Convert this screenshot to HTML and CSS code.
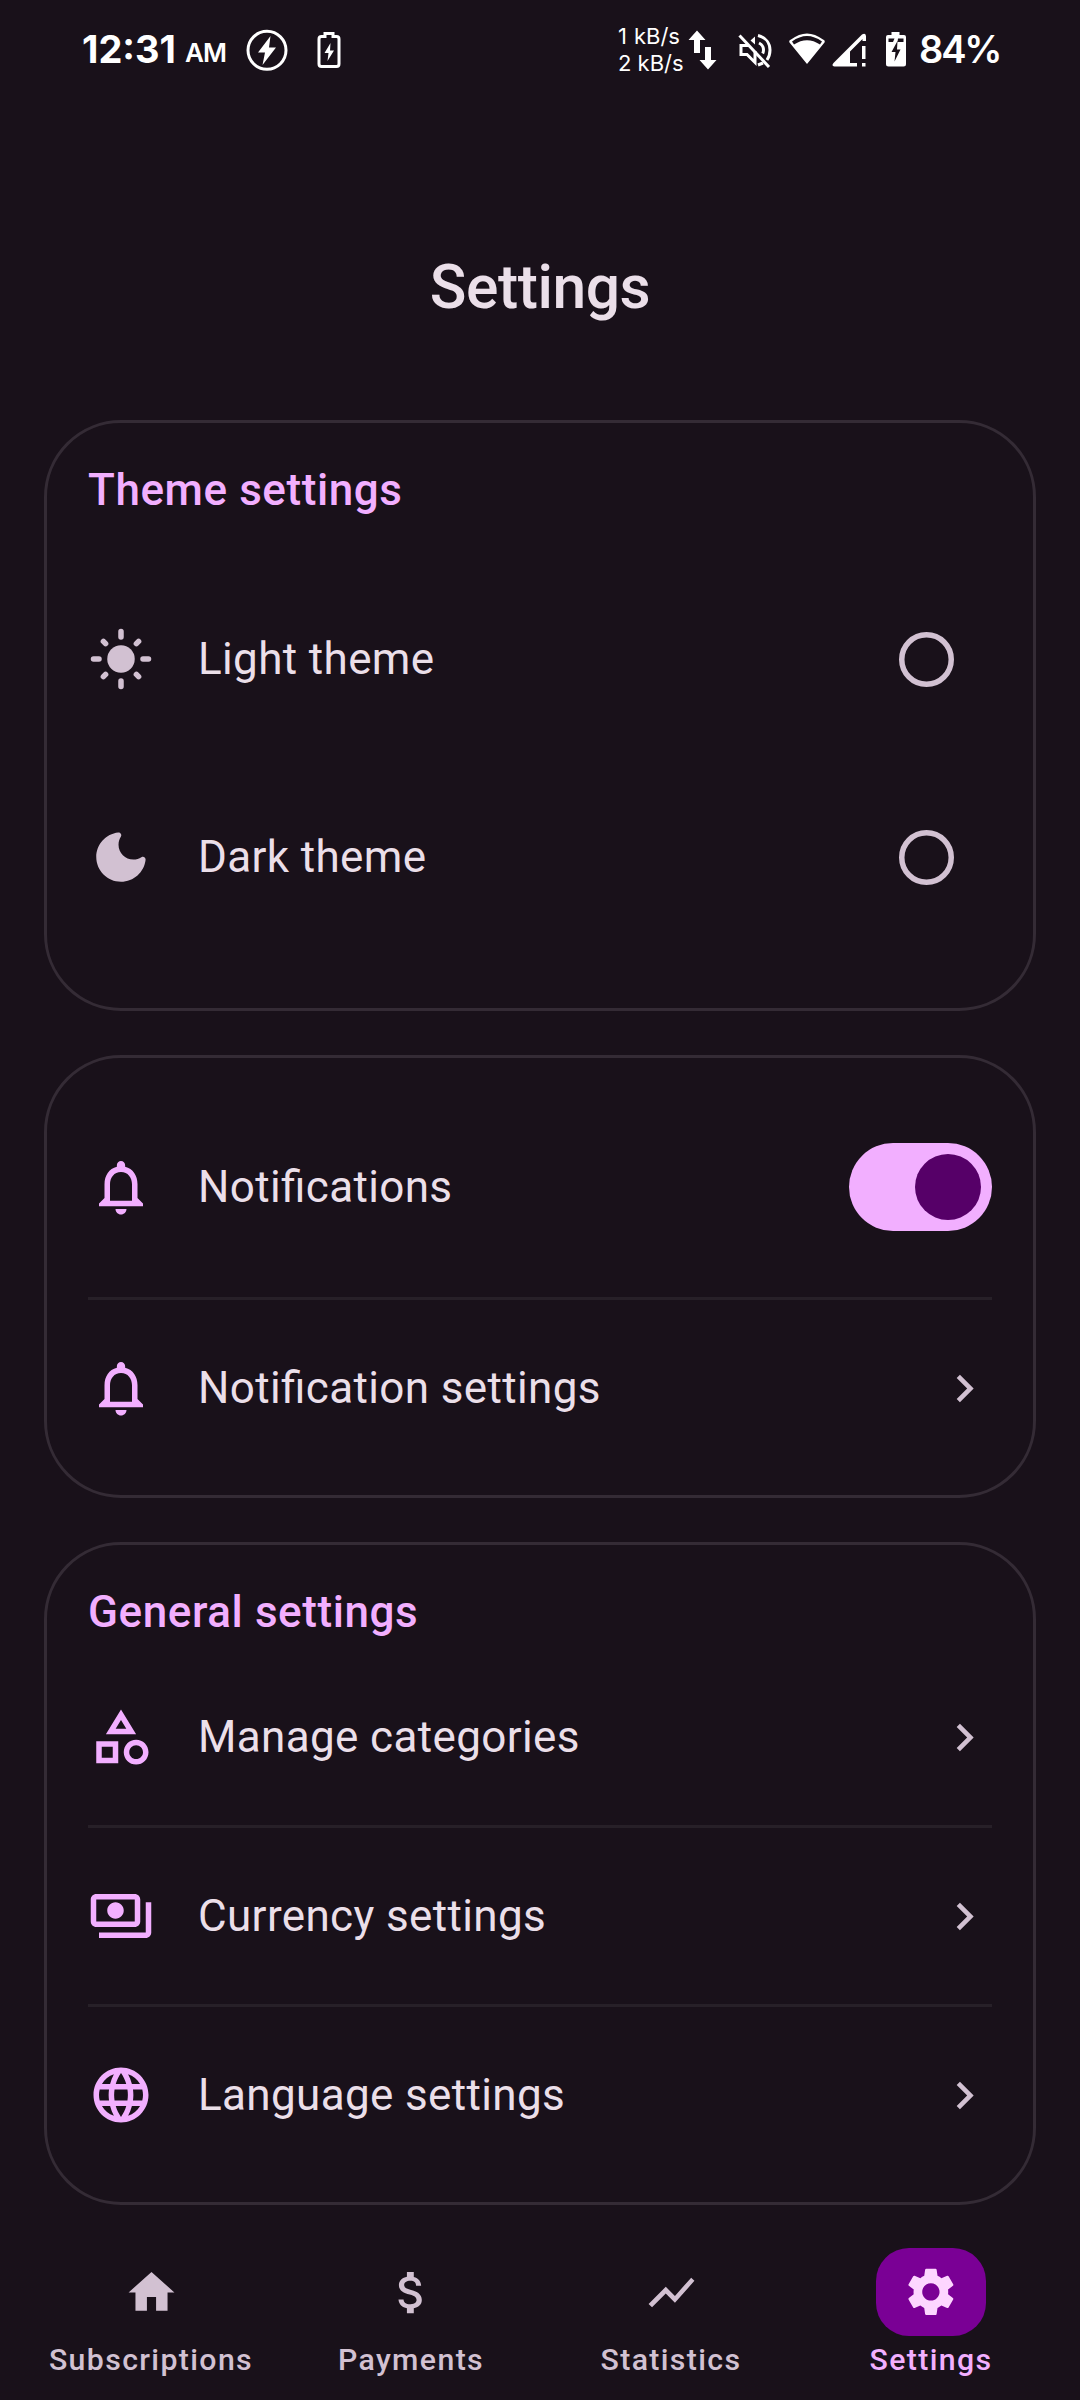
FILE: index.html
```html
<!DOCTYPE html>
<html lang="en">
<head>
<meta charset="utf-8">
<title>Settings</title>
<link rel="stylesheet" href="styles.css">
</head>
<body>
<div class="screen">
  <div class="status-bar">
    <span class="clock">12:31</span><span class="meridiem">AM</span>
    <svg class="bolt-ring" width="44" height="44" viewBox="0 0 44 44"><circle cx="22" cy="22.3" r="19" fill="none" stroke="#fff" stroke-width="3"/><path d="M25.5 8 13 24.500h7L17.500 37 31 19.500h-7z" fill="#fff"/></svg>
    <svg class="battery-outline" width="26" height="44" viewBox="0 0 26 44"><path d="M9 8.500V5.500h8v3h3.500q2.500 0 2.500 2.500v25q0 2.500-2.500 2.500h-15Q3 38.500 3 36V11q0-2.500 2.500-2.500z" fill="none" stroke="#fff" stroke-width="3"/><path d="M14.500 15 8.500 25h4l-1 8 6.500-10.500h-4z" fill="#fff"/></svg>
    <div class="net-speed"><span>1<i class="thin-gap"></i>kB/s</span><span>2 kB/s</span></div>
    <svg class="arrows" width="30" height="44" viewBox="0 0 30 44"><path d="M9 2.500 17.500 12H12v13H6V12H.500zM20 41.500 11.500 32H17V19h6v13h5.500z" fill="#fff"/></svg>
    <svg class="muted" width="34" height="44" viewBox="0 0 34 44"><g fill="none" stroke="#fff" stroke-width="3"><path d="M1.500 7.500 31 39"/><path d="M11 17.500H3v9h6l8 8V23"/><path d="M20 7.500c8 2 12 8 12 14.500 0 4-1 7-3 10M21 15c3 1.500 4.500 4 4.500 7 0 1.500-.3 2.500-.8 3.500M20 37l5-2"/></g><path d="M17 8.500v8l-4.500-4z" fill="#fff"/></svg>
    <svg class="wifi" width="40" height="44" viewBox="0 0 40 44"><path d="M20 36 2.500 14.500Q1.500 12.500 4 11.500 20 -.500 36 11.500q2.500 1 1.500 3z" fill="#fff"/><path d="M5 13.500q15-11 30 0l-2 3Q20 8 7 16.500z" fill="#19111a"/></svg>
    <svg class="signal" width="36" height="44" viewBox="0 0 36 44"><path d="M2.500 38.500Q-1 38 1.500 35L30 6.500q3.500-2 4 1.500v5h-3.500V11L18 23.500V35h7v3.500z" fill="#fff"/><path d="M30 18h3.500v13H30zM30 35h3.500v3.500H30z" fill="#fff"/></svg>
    <svg class="battery-full" width="22" height="44" viewBox="0 0 22 44"><path d="M6.500 7V4h8v3H19q2 0 2 2v27q0 2.500-2.500 2.500h-15Q1 38.500 1 36V9q0-2 2-2z" fill="#fff"/><path d="M3.500 10.500h6l-1.500 3.500h-4.500zM13 10.500h5.500V14h-6zM12.500 13 6.500 24h4l-1 9.500 6-12H12z" fill="#19111a"/></svg>
    <span class="percent">84%</span>
  </div>

  <h1 class="page-title">Settings</h1>

  <main class="cards">
    <section class="card theme-card">
      <h2 class="card-title">Theme settings</h2>
      <div class="row">
        <svg class="icon muted-tone" viewBox="0 0 24 24"><circle cx="12" cy="12" r="5"/><path fill="none" stroke="currentColor" stroke-width="2" stroke-linecap="round" d="M12 2v2M12 20v2M2 12h2M20 12h2M5.600 5.600l.8.8M17.600 17.600l.8.8M5.600 18.400l.8-.8M17.600 6.400l.8-.8"/></svg>
        <span class="label">Light theme</span><svg class="radio" viewBox="0 0 20 20"><circle cx="10" cy="10" r="9"/></svg>
      </div>
      <div class="row">
        <svg class="icon muted-tone" viewBox="0 0 24 24"><path d="M11.010 3.050C6.510 3.540 3 7.360 3 12c0 4.970 4.030 9 9 9 4.630 0 8.450-3.500 8.950-8 .09-.79-.78-1.420-1.540-.95-.84.54-1.840.85-2.910.85-2.980 0-5.400-2.420-5.400-5.400 0-1.060.31-2.060.84-2.890.45-.67-.04-1.630-.93-1.560z"/></svg>
        <span class="label">Dark theme</span><svg class="radio" viewBox="0 0 20 20"><circle cx="10" cy="10" r="9"/></svg>
      </div>
    </section>

    <section class="card notify-card">
      <div class="row tall">
        <svg class="icon" viewBox="0 0 24 24"><path d="M12 22c1.100 0 2-.9 2-2h-4c0 1.100.9 2 2 2zm6-6v-5c0-3.070-1.630-5.640-4.500-6.320V4c0-.83-.67-1.500-1.500-1.500s-1.500.67-1.500 1.500v.68C7.640 5.360 6 7.920 6 11v5l-2 2v1h16v-1l-2-2zm-2 1H8v-6c0-2.480 1.510-4.500 4-4.500s4 2.020 4 4.500v6z"/></svg>
        <span class="label">Notifications</span><span class="switch"><span class="thumb"></span></span>
      </div>
      <div class="row divided">
        <svg class="icon" viewBox="0 0 24 24"><path d="M12 22c1.100 0 2-.9 2-2h-4c0 1.100.9 2 2 2zm6-6v-5c0-3.070-1.630-5.640-4.500-6.320V4c0-.83-.67-1.500-1.500-1.500s-1.500.67-1.500 1.500v.68C7.640 5.360 6 7.920 6 11v5l-2 2v1h16v-1l-2-2zm-2 1H8v-6c0-2.480 1.510-4.500 4-4.500s4 2.020 4 4.500v6z"/></svg>
        <span class="label">Notification settings</span>
        <svg class="chevron" viewBox="0 0 24 24"><path d="M10 6 8.590 7.410 13.170 12l-4.580 4.590L10 18l6-6z"/></svg>
      </div>
    </section>

    <section class="card general-card">
      <h2 class="card-title">General settings</h2>
      <div class="row">
        <svg class="icon" viewBox="0 0 24 24"><path d="M12 2l-5.500 9h11L12 2zm0 3.840L13.930 9h-3.870L12 5.840zM17.500 13c-2.490 0-4.500 2.010-4.500 4.500s2.010 4.500 4.500 4.500 4.500-2.010 4.500-4.500-2.010-4.500-4.500-4.500zm0 7c-1.380 0-2.500-1.120-2.500-2.500s1.120-2.500 2.500-2.500 2.500 1.120 2.500 2.500-1.120 2.500-2.500 2.500zM3 21.500h8v-8H3v8zm2-6h4v4H5v-4z"/></svg>
        <span class="label">Manage categories</span>
        <svg class="chevron" viewBox="0 0 24 24"><path d="M10 6 8.590 7.410 13.170 12l-4.580 4.590L10 18l6-6z"/></svg>
      </div>
      <div class="row divided">
        <svg class="icon" viewBox="0 0 24 24"><path d="M19 14V6c0-1.100-.9-2-2-2H3c-1.100 0-2 .9-2 2v8c0 1.100.9 2 2 2h14c1.100 0 2-.9 2-2zm-2 0H3V6h14v8zm-7-7c-1.660 0-3 1.340-3 3s1.340 3 3 3 3-1.340 3-3-1.340-3-3-3zm13 0v11c0 1.100-.9 2-2 2H4v-2h17V7h2z"/></svg>
        <span class="label">Currency settings</span>
        <svg class="chevron" viewBox="0 0 24 24"><path d="M10 6 8.590 7.410 13.170 12l-4.580 4.590L10 18l6-6z"/></svg>
      </div>
      <div class="row divided">
        <svg class="icon" viewBox="0 0 24 24"><path d="M11.990 2C6.470 2 2 6.480 2 12s4.470 10 9.990 10C17.520 22 22 17.520 22 12S17.520 2 11.990 2zm6.930 6h-2.950c-.32-1.250-.78-2.450-1.380-3.560 1.840.63 3.370 1.910 4.330 3.560zM12 4.040c.83 1.200 1.480 2.530 1.910 3.960h-3.820c.43-1.430 1.080-2.760 1.910-3.960zM4.260 14C4.100 13.360 4 12.690 4 12s.1-1.360.26-2h3.380c-.08.66-.14 1.320-.14 2s.06 1.340.14 2H4.260zm.82 2h2.950c.32 1.250.78 2.450 1.380 3.560-1.840-.63-3.370-1.900-4.330-3.560zm2.950-8H5.080c.96-1.660 2.490-2.930 4.330-3.560C8.810 5.550 8.350 6.750 8.030 8zM12 19.960c-.83-1.200-1.480-2.530-1.910-3.960h3.820c-.43 1.430-1.080 2.760-1.910 3.960zM14.340 14H9.660c-.09-.66-.16-1.320-.16-2s.07-1.350.16-2h4.680c.09.65.16 1.320.16 2s-.07 1.340-.16 2zm.25 5.560c.6-1.110 1.060-2.310 1.380-3.560h2.950c-.96 1.650-2.490 2.930-4.330 3.560zM16.360 14c.08-.66.14-1.320.14-2s-.06-1.340-.14-2h3.380c.16.64.26 1.310.26 2s-.1 1.360-.26 2h-3.380z"/></svg>
        <span class="label">Language settings</span>
        <svg class="chevron" viewBox="0 0 24 24"><path d="M10 6 8.590 7.410 13.170 12l-4.580 4.590L10 18l6-6z"/></svg>
      </div>
    </section>
  </main>

  <nav class="bottom-nav">
    <div class="tab"><span class="pill"><svg viewBox="0 0 24 24"><path d="M10 20v-6h4v6h5v-8h3L12 3 2 12h3v8z"/></svg></span><span class="tab-label">Subscriptions</span></div>
    <div class="tab"><span class="pill"><svg viewBox="0 0 24 24"><path d="M11.800 10.900c-2.270-.59-3-1.200-3-2.150 0-1.090 1.010-1.850 2.700-1.850 1.780 0 2.440.85 2.500 2.100h2.210c-.07-1.720-1.120-3.300-3.210-3.810V3h-3v2.160c-1.940.42-3.500 1.680-3.500 3.610 0 2.310 1.910 3.460 4.700 4.130 2.500.6 3 1.480 3 2.410 0 .69-.49 1.790-2.700 1.790-2.060 0-2.870-.92-2.980-2.100h-2.200c.12 2.190 1.760 3.420 3.680 3.830V21h3v-2.150c1.950-.37 3.500-1.500 3.500-3.550 0-2.840-2.430-3.810-4.700-4.400z"/></svg></span><span class="tab-label">Payments</span></div>
    <div class="tab"><span class="pill"><svg viewBox="0 0 24 24"><path d="M3.500 18.490l6-6.010 4 4L22 6.920l-1.410-1.410-7.090 7.970-4-4L2 16.990z"/></svg></span><span class="tab-label">Statistics</span></div>
    <div class="tab active"><span class="pill"><svg viewBox="0 0 24 24"><path d="M19.140 12.940c.04-.3.06-.61.06-.94 0-.32-.02-.64-.07-.94l2.030-1.580c.18-.14.23-.41.12-.61l-1.920-3.320c-.12-.22-.37-.29-.59-.22l-2.390.96c-.5-.38-1.030-.7-1.620-.94l-.36-2.540c-.04-.24-.24-.41-.48-.41h-3.840c-.24 0-.43.17-.47.41l-.36 2.540c-.59.24-1.130.57-1.620.94l-2.390-.96c-.22-.08-.47 0-.59.22L2.740 8.870c-.12.21-.08.47.12.61l2.030 1.580c-.05.3-.09.63-.09.94s.02.64.07.94l-2.030 1.580c-.18.14-.23.41-.12.61l1.920 3.320c.12.22.37.29.59.22l2.390-.96c.5.38 1.030.7 1.620.94l.36 2.540c.05.24.24.41.48.41h3.840c.24 0 .44-.17.47-.41l.36-2.540c.59-.24 1.130-.56 1.620-.94l2.390.96c.22.08.47 0 .59-.22l1.920-3.320c.12-.22.07-.47-.12-.61l-2.010-1.580zM12 15.600c-1.980 0-3.600-1.620-3.600-3.600s1.620-3.600 3.600-3.600 3.600 1.620 3.600 3.600-1.620 3.600-3.600 3.600z"/></svg></span><span class="tab-label">Settings</span></div>
  </nav>
</div>
</body>
</html>
```
FILE: styles.css
```css
* { box-sizing: border-box; }
body {
  margin: 0;
  background: #19111a;
  color: #ebdfe9;
  font-family: Roboto, "Liberation Sans", sans-serif;
}
h1, h2 { margin: 0; font-weight: 500; }
svg { display: block; flex: none; fill: currentColor; }
.screen { width: 1080px; height: 2400px; display: flex; flex-direction: column; overflow: hidden; }

.status-bar {
  height: 100px;
  padding: 0 81px 0 82px;
  display: flex;
  align-items: center;
  color: #fff;
  font-family: Inter, sans-serif;
  white-space: nowrap;
}
.clock { width: 95px; padding-bottom: 2px; font-size: 38px; line-height: 44px; font-weight: 700; letter-spacing: 0; }
.meridiem { width: 46px; padding-top: 5px; margin-left: 8px; font-size: 26px; line-height: 30px; font-weight: 600; letter-spacing: -1px; }
.bolt-ring { margin-left: 14px; }
.battery-outline { margin-left: 27px; }
.net-speed {
  width: 68px;
  margin-left: auto;
  padding-bottom: 1px;
  display: flex;
  flex-direction: column;
  font-size: 22px;
  line-height: 27px;
}
.thin-gap { display: inline-block; width: 7px; }
.arrows { margin-left: 2px; }
.muted { margin-left: 20px; }
.wifi { margin-left: 15px; }
.signal { margin-left: 5px; }
.battery-full { margin-left: 17px; }
.percent { width: 80px; padding-bottom: 2px; margin-left: 12px; font-size: 38px; line-height: 44px; font-weight: 600; letter-spacing: -2.2px; }

.page-title { margin-top: 149px; text-align: center; font-size: 60.5px; line-height: 77px; letter-spacing: -0.4px; }

.cards { margin-top: 94px; padding: 0 44px; display: flex; flex-direction: column; gap: 44px; }
.card { border: 3px solid #342b35; border-radius: 77px; padding: 0 41px; }
.theme-card { height: 591px; padding-top: 34px; }
.theme-card .card-title { margin-bottom: 37px; }
.theme-card .row { height: 198px; }
.notify-card { height: 443px; padding-top: 19px; }
.general-card { height: 663px; padding-top: 34px; }
.general-card .card-title { margin-bottom: 4px; }
.card-title { color: #f2afff; font-size: 44px; line-height: 66px; letter-spacing: 0.58px; }

.row { height: 176px; display: flex; align-items: center; }
.row.tall { height: 220px; }
.row.divided { height: 179px; border-top: 3px solid #272028; }
.icon { width: 66px; height: 66px; margin-right: 44px; color: #f2afff; }
.icon.muted-tone { color: #d2c1d2; }
.label { flex: 1; font-size: 44px; line-height: 66px; letter-spacing: 0.36px; font-feature-settings: "liga" 1; }
.chevron { width: 55px; height: 55px; color: #d2c1d2; }
.radio { width: 55px; height: 55px; margin-right: 38px; fill: none; stroke: #d2c1d2; stroke-width: 2; }
.switch { width: 143px; height: 88px; padding: 11px; border-radius: 44px; background: #f2afff; display: flex; justify-content: flex-end; }
.thumb { width: 66px; height: 66px; border-radius: 50%; background: #560068; }

.bottom-nav { margin-top: 43px; padding: 0 19px 0 21px; display: grid; grid-template-columns: repeat(4, 1fr); color: #d2c1d2; }
.tab { display: flex; flex-direction: column; align-items: center; gap: 2px; }
.pill { width: 110px; height: 88px; border-radius: 33px; display: grid; place-items: center; }
.pill svg { width: 55px; height: 55px; }
.tab-label { font-size: 30.25px; line-height: 44px; font-weight: 500; letter-spacing: 1.375px; }
.active .pill { background: #7a0095; color: #fdd6ff; }
.active .pill svg { width: 57.75px; height: 57.75px; }
.active .tab-label { color: #f2afff; }
```
